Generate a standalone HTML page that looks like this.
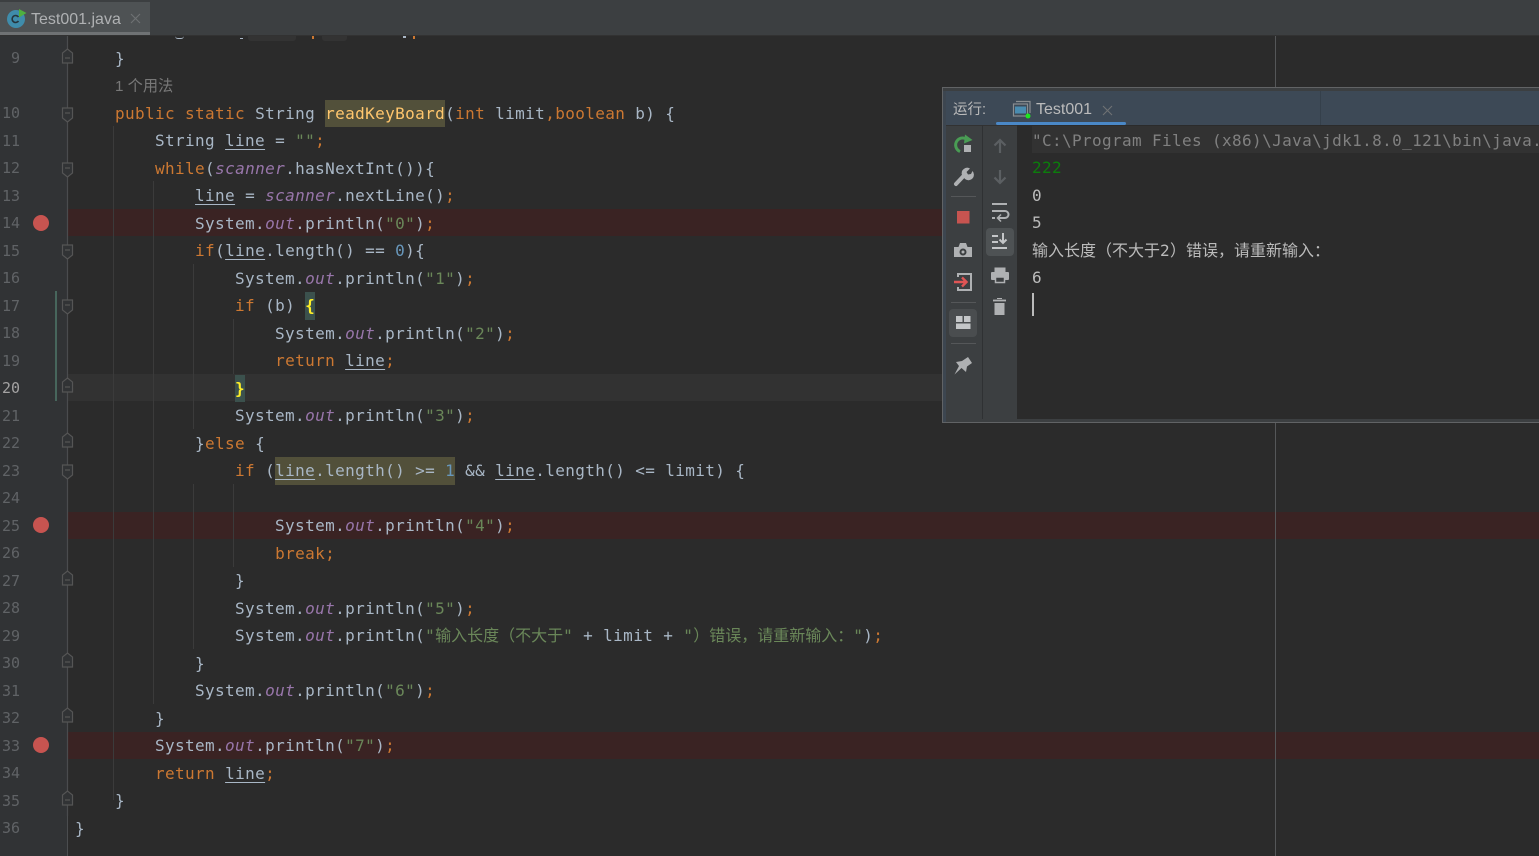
<!DOCTYPE html>
<html><head><meta charset="utf-8"><style>
html,body{margin:0;padding:0;width:1539px;height:856px;overflow:hidden;background:#2b2b2b}
.a{position:absolute}
pre{margin:0;position:absolute;font-family:"DejaVu Sans Mono","Liberation Mono","Noto Sans CJK SC",monospace;font-size:16px;letter-spacing:.37px;line-height:27.5px;color:#a9b7c6}
.k{color:#cc7832}.s{color:#6a8759}.f{color:#9876aa;font-style:italic}.n{color:#6897bb}
.u{text-decoration:underline;text-underline-offset:3px}
.c{font-family:"Noto Sans CJK SC",sans-serif;font-size:16px;letter-spacing:0;line-height:1px}
.h{background:#52503a}.b{background:#3b514d;color:#ffef28;font-weight:bold}
.g{position:absolute;width:1px;background:#3b3b3b}
.bp{position:absolute;left:68px;right:0;width:1471px;height:27px;background:#3a2323}
.dot{position:absolute;left:33px;width:16px;height:16px;border-radius:50%;background:#c75450}
.sep{position:absolute;height:1px;background:#555759}
</style></head><body>
<div class="a" style="left:0;top:0;width:67px;height:856px;background:#313335"></div>
<div class="a" style="left:67px;top:36px;width:1px;height:820px;background:#4b4d4f"></div>
<div class="a" style="left:68px;top:374px;width:1471px;height:27px;background:#323232"></div>
<div class="bp" style="top:209px"></div><div class="bp" style="top:512px"></div><div class="bp" style="top:732px"></div>
<div class="a" style="left:1275px;top:36px;width:1px;height:820px;background:#555759"></div>
<div class="g" style="left:113px;top:126px;height:674px"></div>
<div class="g" style="left:153px;top:181px;height:523px"></div>
<div class="g" style="left:193px;top:264px;height:165px"></div>
<div class="g" style="left:193px;top:484px;height:165px"></div>
<div class="g" style="left:233px;top:319px;height:55px"></div>
<div class="g" style="left:233px;top:484px;height:83px"></div>
<pre style="left:75px;top:44.5px">    }
<span style="color:transparent"> </span>
    <span class="k">public static</span> String <span class="h" style="color:#ffc66d;display:inline-block;height:27.5px;vertical-align:top">readKeyBoard</span>(<span class="k">int</span> limit<span class="k">,boolean</span> b) {
        String <span class="u">line</span> = <span class="s">""</span><span class="k">;</span>
        <span class="k">while</span>(<span class="f">scanner</span>.hasNextInt()){
            <span class="u">line</span> = <span class="f">scanner</span>.nextLine()<span class="k">;</span>
            System.<span class="f">out</span>.println(<span class="s">"0"</span>)<span class="k">;</span>
            <span class="k">if</span>(<span class="u">line</span>.length() == <span class="n">0</span>){
                System.<span class="f">out</span>.println(<span class="s">"1"</span>)<span class="k">;</span>
                <span class="k">if</span> (b) <span class="b" style="display:inline-block;height:27.5px;vertical-align:top">{</span>
                    System.<span class="f">out</span>.println(<span class="s">"2"</span>)<span class="k">;</span>
                    <span class="k">return</span> <span class="u">line</span><span class="k">;</span>
                <span class="b" style="display:inline-block;height:27.5px;vertical-align:top">}</span>
                System.<span class="f">out</span>.println(<span class="s">"3"</span>)<span class="k">;</span>
            }<span class="k">else</span> {
                <span class="k">if</span> (<span class="h" style="display:inline-block;height:27.5px;vertical-align:top"><span class="u">line</span>.length() &gt;= <span class="n">1</span></span> &amp;&amp; <span class="u">line</span>.length() &lt;= limit) {

                    System.<span class="f">out</span>.println(<span class="s">"4"</span>)<span class="k">;</span>
                    <span class="k">break;</span>
                }
                System.<span class="f">out</span>.println(<span class="s">"5"</span>)<span class="k">;</span>
                System.<span class="f">out</span>.println(<span class="s">"<span class="c">输入长度（不大于</span>"</span> + limit + <span class="s">"<span class="c">）错误，请重新输入：</span>"</span>)<span class="k">;</span>
            }
            System.<span class="f">out</span>.println(<span class="s">"6"</span>)<span class="k">;</span>
        }
        System.<span class="f">out</span>.println(<span class="s">"7"</span>)<span class="k">;</span>
        <span class="k">return</span> <span class="u">line</span><span class="k">;</span>
    }
}</pre>
<div class="a" style="left:115px;top:77px;font:15.2px/20px 'Liberation Sans','Noto Sans CJK SC',sans-serif;color:#787878">1 个用法</div>
<pre style="left:0;top:45.25px;width:20px;text-align:right;color:#606366;font-size:15px;letter-spacing:0">9

10
11
12
13
14
15
16
17
18
19
<span style="color:#a4a3a3">20</span>
21
22
23
24
25
26
27
28
29
30
31
32
33
34
35
36</pre>
<div class="dot" style="top:215px"></div><div class="dot" style="top:517px"></div><div class="dot" style="top:737px"></div>
<div class="a" style="left:55px;top:291px;width:2px;height:110px;background:#47665c"></div>
<svg class="a" style="left:60px;top:36px" width="16" height="820" fill="none" stroke="#555" stroke-width="1.2">
<path d="M7.5 0V780" stroke="#4a4c4e"/>
<g fill="#313335">
<path d="M2.500 27V17L7.500 13 12.500 17V27Z M5 22H10"/>
<path d="M2.500 72H12.500V82L7.500 86 2.500 82Z M5 77H10"/>
<path d="M2.500 127H12.500V137L7.500 141 2.500 137Z M5 132H10"/>
<path d="M2.500 209H12.500V219L7.500 223 2.500 219Z M5 214H10"/>
<path d="M2.500 264H12.500V274L7.500 278 2.500 274Z M5 269H10"/>
<path d="M2.500 356V346L7.500 342 12.500 346V356Z M5 351H10"/>
<path d="M2.500 411V401L7.500 397 12.500 401V411Z M5 406H10"/>
<path d="M2.500 429H12.500V439L7.500 443 2.500 439Z M5 434H10"/>
<path d="M2.500 549V539L7.500 535 12.500 539V549Z M5 544H10"/>
<path d="M2.500 631V621L7.500 617 12.500 621V631Z M5 626H10"/>
<path d="M2.500 686V676L7.500 672 12.500 676V686Z M5 681H10"/>
<path d="M2.500 769V759L7.500 755 12.500 759V769Z M5 764H10"/>
</g></svg>
<!-- clipped previous line -->
<div class="a" style="left:248px;top:36px;width:48px;height:5px;background:#333;border-radius:0 0 3px 3px"></div>
<div class="a" style="left:322px;top:36px;width:25px;height:5px;background:#333;border-radius:0 0 3px 3px"></div>
<div class="a" style="left:175px;top:36px;width:9px;height:2px;border-bottom:1px solid #a9b7c6;border-radius:0 0 4px 4px"></div>
<div class="a" style="left:240px;top:36px;width:3px;height:2px;border-bottom:1px solid #a9b7c6"></div>
<div class="a" style="left:312px;top:36px;width:2px;height:3px;background:#cc7832"></div>
<div class="a" style="left:403px;top:36px;width:3px;height:2px;background:#a9b7c6"></div>
<div class="a" style="left:413px;top:36px;width:2px;height:3px;background:#cc7832"></div>
<!-- tab bar -->
<div class="a" style="left:0;top:0;width:1539px;height:36px;background:#3c3f41;border-bottom:1px solid #323232;box-sizing:border-box"></div>
<div class="a" style="left:0;top:2px;width:150px;height:30px;background:#4e5254"></div>
<div class="a" style="left:0;top:32px;width:150px;height:3px;background:#6f7274"></div>
<svg class="a" style="left:6px;top:8px" width="22" height="22"><circle cx="10" cy="11" r="9" fill="#3f8cab"/><path d="M12.500 9a3.500 3.500 0 1 0 0 4" fill="none" stroke="#26343c" stroke-width="1.6"/><path d="M13 1L20.500 5 13 9.500Z" fill="#4fb03f"/></svg>
<div class="a" style="left:31px;top:10px;font:16px/20px 'Liberation Sans',sans-serif;color:#afb1b3">Test001.java</div>
<svg class="a" style="left:130px;top:13px" width="11" height="11"><path d="M1 1L10 10M10 1L1 10" stroke="#6f7274" stroke-width="1.1"/></svg>
<!-- run panel -->
<div class="a" style="left:942px;top:87px;width:597px;height:336px;background:#3c3f41;border:1px solid #616365;border-right:0;box-sizing:border-box"></div>
<div class="a" style="left:943px;top:88px;width:596px;height:3px;background:#3c3f41"></div>
<div class="a" style="left:946px;top:91px;width:593px;height:34px;background:#3d4956"></div>
<div class="a" style="left:946px;top:125px;width:593px;height:1px;background:#323232"></div>
<div class="a" style="left:1320px;top:91px;width:1px;height:34px;background:#35404b"></div>
<div class="a" style="left:943px;top:91px;width:3px;height:331px;background:#3d4650"></div>
<div class="a" style="left:982px;top:125px;width:1px;height:294px;background:#2f3133"></div>
<div class="a" style="left:1017px;top:125px;width:522px;height:294px;background:#2b2b2b"></div>
<div class="a" style="left:1017px;top:419px;width:522px;height:3px;background:#3c3f41"></div>
<div class="a" style="left:953px;top:100px;font:14.500px/20px 'Liberation Sans','Noto Sans CJK SC',sans-serif;color:#bbb">运行:</div>
<svg class="a" style="left:1012px;top:98px" width="22" height="22"><path d="M4 3.500H18V15" fill="none" stroke="#8a8e91" stroke-width="1.2"/><rect x="1.500" y="6" width="14" height="12" fill="#3d4956" stroke="#8a8e91" stroke-width="1.2"/><rect x="3" y="8.500" width="11" height="7" fill="#4a8cb0"/><circle cx="16" cy="18" r="2.500" fill="#1ee61e"/></svg>
<div class="a" style="left:1036px;top:100px;font:16px/20px 'Liberation Sans',sans-serif;color:#bbbbbb">Test001</div>
<svg class="a" style="left:1102px;top:105px" width="11" height="11"><path d="M1 1L10 10M10 1L1 10" stroke="#6f7274" stroke-width="1.1"/></svg>
<div class="a" style="left:996px;top:122px;width:130px;height:3px;background:#4a88c7;border-radius:2px"></div>
<!-- console -->
<div class="a" style="left:1032px;top:126px;width:507px;height:27px;background:#323232"></div>
<pre style="left:1032px;top:126.500px;color:#bbb;overflow:hidden;width:507px"><span style="color:#808080">"C:\Program Files (x86)\Java\jdk1.8.0_121\bin\java.</span>
<span style="color:#0c7c0c">222</span>
0
5
<span class="c">输入长度（不大于</span>2<span class="c">）错误，请重新输入：</span>
6</pre>
<div class="a" style="left:1032px;top:293px;width:2px;height:23px;background:#bbb"></div>
<div class="a" style="left:986px;top:228px;width:28px;height:28px;background:#4e5254;border-radius:4px"></div>
<div class="a" style="left:949px;top:309px;width:28px;height:28px;background:#4a4d4f;border-radius:4px"></div>
<div class="sep" style="left:951px;top:196px;width:25px"></div>
<div class="sep" style="left:951px;top:302px;width:25px"></div>
<div class="sep" style="left:951px;top:343px;width:25px"></div>
<svg class="a" style="left:945px;top:125px" width="75" height="260" fill="none">
<!-- rerun -->
<path d="M23 15.500A7 7 0 1 0 15 26.500" stroke="#499c54" stroke-width="3"/><path d="M20 9.500L27.500 15 19 18.500Z" fill="#499c54"/><rect x="19" y="20" width="7" height="7" fill="#afb1b3"/>
<!-- wrench -->
<path d="M11 59L19 50.500" stroke="#afb1b3" stroke-width="4" stroke-linecap="round"/><path d="M17 50A5.500 5.500 0 0 1 25 43.500L21.500 47 23 49.500 26 49 27.500 46A5.500 5.500 0 0 1 20 54Z" fill="#afb1b3"/>
<!-- up/down -->
<path d="M55 28V15M49.500 20.500L55 15 60.500 20.500" stroke="#5b5f62" stroke-width="2.200"/>
<path d="M55 45V58M49.500 52.500L55 58 60.500 52.500" stroke="#5b5f62" stroke-width="2.200"/>
<!-- stop -->
<rect x="12" y="86" width="12.500" height="12.500" fill="#c75450"/>
<!-- wrap -->
<path d="M47 79H62M47 86H60A3.500 3.500 0 0 1 60 93H53M47 93H50" stroke="#afb1b3" stroke-width="2"/><path d="M56 89.500L52.500 93 56 96.500" stroke="#afb1b3" stroke-width="1.500"/>
<!-- scroll end -->
<path d="M47 111H53M47 117H53M47 123H62M58 108V118M54.500 114.500L58 118 61.500 114.500" stroke="#c4c6c8" stroke-width="2"/>
<!-- camera -->
<path d="M9 122H13.500L15 118H21L22.500 122H27V132H9Z" fill="#afb1b3"/><circle cx="18" cy="127" r="3.500" fill="#3c3f41"/><circle cx="18" cy="127" r="1.500" fill="#afb1b3"/>
<!-- login -->
<path d="M13 152V149H26V165H13V162" stroke="#afb1b3" stroke-width="2"/><path d="M9 157H21M17 152.500L21.500 157 17 161.500" stroke="#e05555" stroke-width="2.400"/>
<!-- printer -->
<path d="M50 148V143H60V148" fill="#afb1b3" stroke="#afb1b3"/><rect x="46" y="147" width="18" height="8" rx="1" fill="#afb1b3"/><rect x="50.500" y="152" width="9" height="5.500" fill="#3c3f41" stroke="#afb1b3" stroke-width="1.500"/>
<!-- trash -->
<path d="M48 175.500H61" stroke="#afb1b3" stroke-width="1.800"/><path d="M52 173.500H57" stroke="#afb1b3"/><path d="M49.500 178H59.500V190H49.500Z" fill="#afb1b3"/>
<!-- layout -->
<path d="M11 191H17.500V197H11ZM19 191H25.500V197H19ZM11 198.500H25.500V204H11Z" fill="#c4c6c8"/>
<!-- pin -->
<path d="M23 232L27 238 22 241.500 21 247 16.500 243 9.500 249.500 14 241 11 237 17 236Z" fill="#afb1b3"/>
</svg>
</body></html>
